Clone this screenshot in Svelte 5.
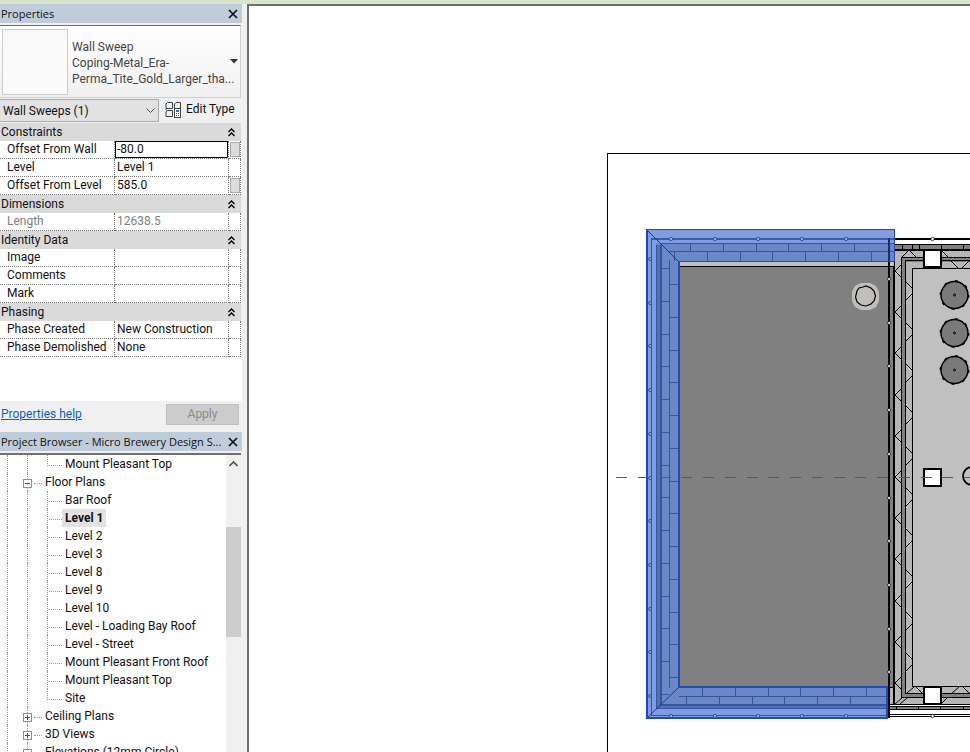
<script lang="ts">
    interface Field {
        id: string
        label: string
        value: string
        button?: boolean
        active?: boolean
        readonly?: boolean
    }

    interface Group {
        name: string
        fields: Field[]
    }

    const groups: Group[] = [
        {
            name: 'Constraints',
            fields: [
                { id: 'offset-wall', label: 'Offset From Wall', value: '-80.0', button: true, active: true },
                { id: 'level', label: 'Level', value: 'Level 1' },
                { id: 'offset-level', label: 'Offset From Level', value: '585.0', button: true },
            ],
        },
        {
            name: 'Dimensions',
            fields: [{ id: 'length', label: 'Length', value: '12638.5', readonly: true }],
        },
        {
            name: 'Identity Data',
            fields: [
                { id: 'image', label: 'Image', value: '' },
                { id: 'comments', label: 'Comments', value: '' },
                { id: 'mark', label: 'Mark', value: '' },
            ],
        },
        {
            name: 'Phasing',
            fields: [
                { id: 'phase-created', label: 'Phase Created', value: 'New Construction' },
                { id: 'phase-demolished', label: 'Phase Demolished', value: 'None' },
            ],
        },
    ]

    const views = [
        { name: 'Bar Roof' },
        { name: 'Level 1', current: true },
        { name: 'Level 2' },
        { name: 'Level 3' },
        { name: 'Level 8' },
        { name: 'Level 9' },
        { name: 'Level 10' },
        { name: 'Level - Loading Bay Roof' },
        { name: 'Level - Street' },
        { name: 'Mount Pleasant Front Roof' },
        { name: 'Mount Pleasant Top' },
        { name: 'Site', last: true },
    ]

    const folders = [
        { name: 'Ceiling Plans', open: false },
        { name: '3D Views', open: false },
        { name: 'Elevations (12mm Circle)', open: true },
    ]

    /** Evenly spaced positions along a wall */
    function steps(start: number, pitch: number, count: number) {
        return Array.from({ length: count }, (_, i) => Math.round(start + i * pitch))
    }

    const outerBricks = steps(268, 32.75, 14)
    const innerBricks = steps(284, 32.75, 13)
    const sideNodes = steps(259, 43.7, 11)
    const edgeNodes = steps(671, 43.7, 5)
    const wallNodes = steps(279, 43.7, 10)
    const leftBatts = steps(271, 41.2, 11)
    const rightBatts = steps(291, 41.2, 10)
    const tanks = [295, 333, 370]
    const columns = [250, 469, 687]
</script>

{#snippet closeIcon()}
    <svg width="10" height="10" viewBox="0 0 10 10" aria-hidden="true">
        <path d="M1 1 9 9M9 1 1 9" fill="none" stroke="#111" stroke-width="1.7" />
    </svg>
{/snippet}

{#snippet folder(name: string, open: boolean)}
    <li class="row">
        <span class="guide"></span>
        <span class="guide node">
            <button class="expander" type="button" aria-label={open ? `Collapse ${name}` : `Expand ${name}`}>
                <svg width="9" height="9" viewBox="0 0 9 9" aria-hidden="true">
                    <rect x=".5" y=".5" width="8" height="8" fill="#fff" stroke="#8b8f98" />
                    <path d={open ? 'M2 4.5h5' : 'M2 4.5h5M4.5 2v5'} stroke="#35528f" />
                </svg>
            </button>
        </span>
        <span class="item">{name}</span>
    </li>
{/snippet}

{#snippet leaf(name: string, current = false, last = false)}
    <li class="row">
        <span class="guide"></span>
        <span class="guide"></span>
        <span class="branch" class:last></span>
        <span class="item" class:current>{name}</span>
    </li>
{/snippet}

<div class="app">
    <div class="ribbon-edge"></div>
    <div class="workspace">
        <aside class="dock">
            <section class="properties">
                <header class="title">
                    <h2>Properties</h2>
                    <button class="close" type="button" aria-label="Close Properties">{@render closeIcon()}</button>
                </header>
                <button class="type-selector" type="button">
                    <span class="thumb"></span>
                    <span class="type-name">Wall Sweep<br />Coping-Metal_Era-<br />Perma_Tite_Gold_Larger_tha...</span>
                    <svg class="drop" width="8" height="5" viewBox="0 0 8 5" aria-hidden="true">
                        <path d="M0 0h8L4 4.5z" fill="#333" />
                    </svg>
                </button>
                <div class="filter">
                    <div class="combo">
                        <select aria-label="Element filter">
                            <option>Wall Sweeps (1)</option>
                        </select>
                        <svg class="chevron" width="9" height="6" viewBox="0 0 9 6" aria-hidden="true">
                            <path d="M.5 .5 4.5 4.5 8.5 .5" fill="none" stroke="#555" />
                        </svg>
                    </div>
                    <button class="edit-type" type="button">
                        <svg width="17" height="17" viewBox="0 0 17 17" fill="none" stroke="#3c4248" aria-hidden="true">
                            <path d="M1 7.5V3L2.5 1.5H7.5V7.5zM9.5 7.5V3L11 1.5H15.5V7.5zM1 15.5V11L2.5 9.5H7.5V15.5zM1 7.5V9.5" />
                            <rect x="9.5" y="7.5" width="6" height="9" fill="#fff" />
                            <path d="M11 10h3" stroke="#2676c8" stroke-width="2" />
                            <path d="M11 12.5h1M13 12.5h1M11 14.5h1M13 14.5h1" />
                        </svg>
                        Edit Type
                    </button>
                </div>

                <table class="params">
                    <colgroup>
                        <col class="col-label" />
                        <col />
                        <col class="col-button" />
                    </colgroup>
                    {#each groups as group (group.name)}
                        <tbody>
                            <tr class="group">
                                <th colspan="3" scope="rowgroup">
                                    <div class="group-head">
                                        {group.name}
                                        <button class="collapse" type="button" aria-label={`Collapse ${group.name}`}>
                                            <svg width="7" height="9" viewBox="0 0 7 9" aria-hidden="true">
                                                <path
                                                    d="M.5 4 3.5 1 6.5 4M.5 8 3.5 5 6.5 8"
                                                    fill="none"
                                                    stroke="#000"
                                                    stroke-width="1.3"
                                                />
                                            </svg>
                                        </button>
                                    </div>
                                </th>
                            </tr>
                            {#each group.fields as field (field.id)}
                                <tr class="field" class:readonly={field.readonly}>
                                    <th scope="row"><label for={field.id}>{field.label}</label></th>
                                    <td>
                                        <input
                                            id={field.id}
                                            class:active={field.active}
                                            type="text"
                                            value={field.value}
                                            readonly={field.readonly}
                                        />
                                    </td>
                                    <td>
                                        {#if field.button}
                                            <button class="associate" type="button" aria-label={`Associate ${field.label}`}
                                            ></button>
                                        {/if}
                                    </td>
                                </tr>
                            {/each}
                        </tbody>
                    {/each}
                </table>

                <footer class="actions">
                    <a href="#help">Properties help</a>
                    <button class="apply" type="button" disabled>Apply</button>
                </footer>
            </section>

            <section class="browser">
                <header class="title">
                    <h2>Project Browser - Micro Brewery Design S...</h2>
                    <button class="close" type="button" aria-label="Close Project Browser">{@render closeIcon()}</button>
                </header>
                <div class="tree">
                    <ul>
                        {@render leaf('Mount Pleasant Top', false, true)}
                        {@render folder('Floor Plans', true)}
                        {#each views as view (view.name)}
                            {@render leaf(view.name, view.current, view.last)}
                        {/each}
                        {#each folders as f (f.name)}
                            {@render folder(f.name, f.open)}
                        {/each}
                    </ul>
                    <div class="scrollbar">
                        <button class="scroll-up" type="button" aria-label="Scroll up">
                            <svg width="9" height="6" viewBox="0 0 9 6" aria-hidden="true">
                                <path d="M.5 5 4.5 1 8.5 5" fill="none" stroke="#505050" stroke-width="1.6" />
                            </svg>
                        </button>
                        <div class="thumb-bar"></div>
                    </div>
                </div>
            </section>
        </aside>

        <main class="canvas">
            <svg class="plan" role="img" aria-label="Level 1 floor plan">
                <g transform="translate(-249 -6)" shape-rendering="crispEdges" fill="none">
                    <path d="M1600 153.5H607.5V1400" stroke="#000" />

                    <!-- roof area beside the building -->
                    <rect x="679" y="261" width="216" height="5" fill="#c0c0c0" />
                    <rect x="679" y="266" width="215" height="421" fill="#808080" />
                    <rect x="889" y="687" width="5" height="18" fill="#b6b6b6" />
                    <path d="M679 266.5H894M889 687.5H894" stroke="#000" />

                    <!-- cavity wall of the main building -->
                    <rect x="894" y="250" width="76" height="455" fill="#b6b6b6" />
                    <rect x="894" y="245" width="76" height="5" fill="#808080" />
                    <path d="M970 259.5H904V695.5H970" stroke="#808080" stroke-width="4" />
                    <rect x="912" y="268" width="58" height="419" fill="#c0c0c0" />
                    <path d="M970 257.5H901.5V697.5H970M970 260.5H905.5V693.5H970M970 268.5H912.5V686.5H970" stroke="#000" />
                    <path d="M894 244.5H970M902.5 245v5M912.5 245v5M919.5 245v5M941.5 245v5M963.5 245v5" stroke="#000" />
                    <path d="M894 249.5H970M894 267V705M888 239H970M889 238V718" stroke="#000" stroke-width="2" />
                    <path d="M894.5 250V268" stroke="#000" />
                    <rect x="890" y="705" width="80" height="13" fill="#fff" />
                    <rect x="890" y="707" width="80" height="3" fill="#808080" />
                    <path
                        d="M890 704.5H970M890 706.5H970M890 709.5H970M890 714.5H970M890 716.5H970M896.5 707v3M918.5 707v3M940.5 707v3M963.5 707v3"
                        stroke="#000"
                    />
                    <g stroke="#000" shape-rendering="auto">
                        <path d="M902 257 909 250 916 257M941 250 948 257M951 261 958 268M962 268 969 261" />
                        <path d="M895 704 902 698M900 704 907 698M907 693 914 687M916 687 922 693M952 693 959 687M963 687 969 693M941 704 947 698" />
                        {#each leftBatts as y (y)}
                            <path d={`M901 ${y - 6} 895 ${y} 901 ${y + 6}`} />
                        {/each}
                        {#each rightBatts as y (y)}
                            <path d={`M906 ${y - 9} 912 ${y - 3}M912 ${y + 3} 906 ${y + 9}`} />
                        {/each}
                    </g>

                    <!-- selected wall sweep -->
                    <path d="M647 230H894V261H679V687H888V718H647z" fill="#7f9de0" />
                    <path d="M656 243H894V261H679V687H888V709H656z" fill="#6a88c8" />
                    <path d="M659 245V706H888" stroke="#5272b4" stroke-width="4" />
                    <g stroke="#35559d">
                        <path d="M894 239H651" stroke-width="2" stroke="#3a5ca8" />
                        <path d="M651.5 240V715.5H888M888 717.5H651" />
                        <path d="M656.5 245V708.5H888M894 243.5H661M894 251.5H669M669.5 260V688M679 696.5H888" />
                        <path d="M661 245V704.5H888" stroke-width="2" />
                        {#each outerBricks as y (y)}
                            <path d={`M662 ${y}.5H669`} />
                        {/each}
                        {#each innerBricks as y (y)}
                            <path d={`M670 ${y}.5H678`} />
                        {/each}
                        {#each steps(690, 32.8, 6) as x (x)}
                            <path d={`M${x}.5 244V251`} />
                        {/each}
                        {#each steps(674, 32.8, 7) as x (x)}
                            <path d={`M${x}.5 252V261`} />
                        {/each}
                        {#each steps(702, 32.8, 6) as x (x)}
                            <path d={`M${x}.5 688V696`} />
                        {/each}
                        {#each steps(686, 32.8, 6) as x (x)}
                            <path d={`M${x}.5 697V704`} />
                        {/each}
                    </g>
                    <path d="M889 238V262" stroke="#16306e" stroke-width="2" />
                    <path d="M647 230 679 262M647 718 679 687" stroke="#123a9c" shape-rendering="auto" />
                    <path d="M894.5 262V229.5H646M679 261.5H894" stroke="#1d4bbd" />
                    <path d="M647 229V718H887V687H679V261" stroke="#1d4bbd" stroke-width="2" />
                    <g fill="#8fa9e2" stroke="#35559d" shape-rendering="auto">
                        {#each sideNodes as y (y)}
                            <circle cx="650" cy={y} r="1.5" />
                        {/each}
                        {#each edgeNodes as x (x)}
                            <circle cx={x} cy="239" r="1.7" />
                            <circle cx={x} cy="716" r="1.7" />
                        {/each}
                    </g>
                    <g fill="#fff" stroke="#000" stroke-width=".7" shape-rendering="auto">
                        {#each wallNodes as y (y)}
                            <circle cx="889" cy={y} r="1.5" />
                        {/each}
                        <circle cx="932.5" cy="239" r="1.7" />
                        <circle cx="932.5" cy="716" r="1.7" />
                    </g>

                    <!-- roof outlet and tanks -->
                    <g shape-rendering="auto">
                        <path d="M861 283H870L876 286 879 292V301L876 307 870 310H861L855 307 852 301V292L855 286z" fill="#c0beba" />
                        <path d="M863 287 866 286 871 288 874 291 875.5 296 874 301 871 304 866 306 861 305 857 302 855.5 297 857 291 859 288z" stroke="#000" stroke-width="1.2" />
                        {#each tanks as y (y)}
                            <circle cx="954.5" cy={y} r="13.5" fill="#7a7a7a" stroke="#000" stroke-width="1.5" />
                            <circle
                                cx="954.5"
                                cy={y}
                                r="14.2"
                                stroke="#000"
                                stroke-width="1.5"
                                stroke-dasharray="3 8.15"
                            />
                            <circle cx="954.5" cy={y} r="1" stroke="#000" />
                        {/each}
                        <circle cx="972" cy="476" r="9" stroke="#000" stroke-width="1.8" />
                    </g>

                    {#each columns as y (y)}
                        <rect x="924" {y} width="17" height="17" fill="#fff" stroke="#000" stroke-width="2" />
                    {/each}
                    <path d="M616 477.5H1600" stroke="#108a20" stroke-dasharray="11 10.75" />
                </g>
            </svg>
        </main>
    </div>
</div>

<style>
    :global(body) {
        margin: 0;
    }

    .app {
        display: flex;
        flex-direction: column;
        height: 100vh;
        overflow: hidden;
        background: #f0f0f0;
        color: #111;
        font: 12px/18px Roboto, 'Open Sans', sans-serif;
    }

    button,
    input,
    select {
        margin: 0;
        padding: 0;
        border: none;
        border-radius: 0;
        background: transparent;
        color: inherit;
        font: inherit;
    }

    .ribbon-edge {
        flex: none;
        height: 4px;
        background: #d9e6cd;
    }

    .workspace {
        display: flex;
        flex: 1;
        min-height: 0;
    }

    .dock {
        display: flex;
        flex: none;
        flex-direction: column;
        width: 242px;
        margin-right: 5px;
    }

    .title {
        display: flex;
        flex: none;
        align-items: center;
        justify-content: space-between;
        height: 19px;
        padding: 0 4px 0 1px;
        background: #bfcddb;
    }

    .title h2 {
        margin: 0;
        font: 11px/18px 'Open Sans', sans-serif;
        white-space: nowrap;
    }

    .close {
        display: flex;
        flex: none;
    }

    .properties {
        display: flex;
        flex: none;
        flex-direction: column;
        height: 428px;
        background: linear-gradient(#f0f0f0 340px, #fff 340px, #fff 397px, #f0f0f0 397px);
    }

    .type-selector {
        display: flex;
        flex: none;
        align-items: center;
        height: 73px;
        margin: 2px 1px 0 0;
        padding: 0 2px;
        border-top: 1px solid #707070;
        border-right: 1px solid #d0d0d0;
        border-bottom: 1px solid #d0d0d0;
        background: linear-gradient(#fff, #f0f0f0);
        color: #444;
        line-height: 16px;
        text-align: left;
    }

    .thumb {
        flex: none;
        width: 64px;
        height: 64px;
        margin-right: 4px;
        border: 1px solid #ccc;
        background: #fafafa;
    }

    .type-name {
        flex: 1;
        min-width: 0;
        padding-top: 2px;
        white-space: nowrap;
    }

    .drop {
        flex: none;
    }

    .filter {
        display: flex;
        flex: none;
        align-items: center;
        height: 25px;
    }

    .combo {
        position: relative;
        width: 159px;
        height: 23px;
        margin-right: 6px;
    }

    .combo select {
        width: 100%;
        height: 100%;
        padding: 0 3px;
        border: 1px solid #acacac;
        border-left: none;
        background: #e2e2e2;
        appearance: none;
    }

    .chevron {
        position: absolute;
        top: 9px;
        right: 4px;
        pointer-events: none;
    }

    .edit-type {
        display: flex;
        align-items: center;
        gap: 4px;
        padding-bottom: 3px;
        white-space: nowrap;
    }

    .params {
        flex: none;
        width: 241px;
        border-collapse: separate;
        border-spacing: 0;
        background: #fff;
        table-layout: fixed;
    }

    .col-label {
        width: 115px;
    }

    .col-button {
        width: 12px;
    }

    .params th,
    .params td {
        box-sizing: border-box;
        height: 18px;
        padding: 0;
        font-weight: 400;
        text-align: left;
        white-space: nowrap;
    }

    .group-head {
        display: flex;
        align-items: center;
        justify-content: space-between;
        height: 18px;
        padding: 0 6px 0 1px;
        background: #dadada;
    }

    .collapse {
        display: flex;
    }

    .field th,
    .field td {
        border-right: 1px dotted #777;
        border-bottom: 1px dotted #777;
        line-height: 16px;
    }

    .params .field th {
        padding-left: 7px;
        vertical-align: top;
    }

    .field label {
        display: block;
    }

    .field input {
        display: block;
        box-sizing: border-box;
        width: 100%;
        height: 17px;
        padding: 0 2px 1px;
        outline: none;
    }

    .field input.active {
        padding: 0 1px 1px;
        border: 1px solid #000;
    }

    .readonly {
        color: #808080;
    }

    .associate {
        display: block;
        box-sizing: border-box;
        width: 10px;
        height: 15px;
        margin-left: 1px;
        border: 1px solid #aaa;
        background: #dcdcdc;
    }

    .actions {
        display: flex;
        align-items: center;
        justify-content: space-between;
        height: 26px;
        margin-top: auto;
        padding: 0 3px 5px 1px;
    }

    .actions a {
        color: #0a5fc4;
    }

    .apply {
        box-sizing: border-box;
        width: 73px;
        height: 21px;
        border: 1px solid #bfbfbf;
        background: #ccc;
        color: #8a8a8a;
    }

    .browser {
        display: flex;
        flex: 1;
        flex-direction: column;
        min-height: 0;
    }

    .tree {
        display: flex;
        flex: 1;
        min-height: 0;
        margin: 2px 1px 0 0;
        border-top: 2px solid #707070;
        background: #fff;
    }

    .tree ul {
        flex: 1;
        margin: 0;
        padding: 0;
        overflow: hidden;
        list-style: none;
    }

    .row {
        display: flex;
        height: 18px;
        padding-left: 7px;
        white-space: nowrap;
    }

    .guide,
    .branch {
        box-sizing: border-box;
        flex: none;
        width: 20px;
        border-left: 1px dotted #999;
    }

    .node {
        position: relative;
        width: 15px;
    }

    .node::after,
    .branch::after {
        content: '';
        display: block;
        height: 10px;
        margin-left: 1px;
        border-bottom: 1px dotted #999;
    }

    .node::after {
        margin-left: 6px;
    }

    .branch {
        width: 15px;
    }

    .branch.last {
        height: 11px;
    }

    .expander {
        position: absolute;
        top: 6px;
        left: -5px;
        display: flex;
    }

    .item {
        padding: 0 3px;
        line-height: 18px;
    }

    .item.current {
        background: #e2e2e2;
        font-weight: 700;
    }

    .scrollbar {
        flex: none;
        width: 15px;
        background: #f0f0f0;
    }

    .scroll-up {
        display: flex;
        align-items: center;
        justify-content: center;
        width: 100%;
        height: 18px;
    }

    .thumb-bar {
        height: 110px;
        margin-top: 54px;
        background: #cdcdcd;
    }

    .canvas {
        flex: 1;
        min-width: 0;
        border-top: 2px solid #707070;
        border-left: 2px solid #707070;
        background: #fff;
    }

    .plan {
        display: block;
        width: 100%;
        height: 100%;
    }
</style>
